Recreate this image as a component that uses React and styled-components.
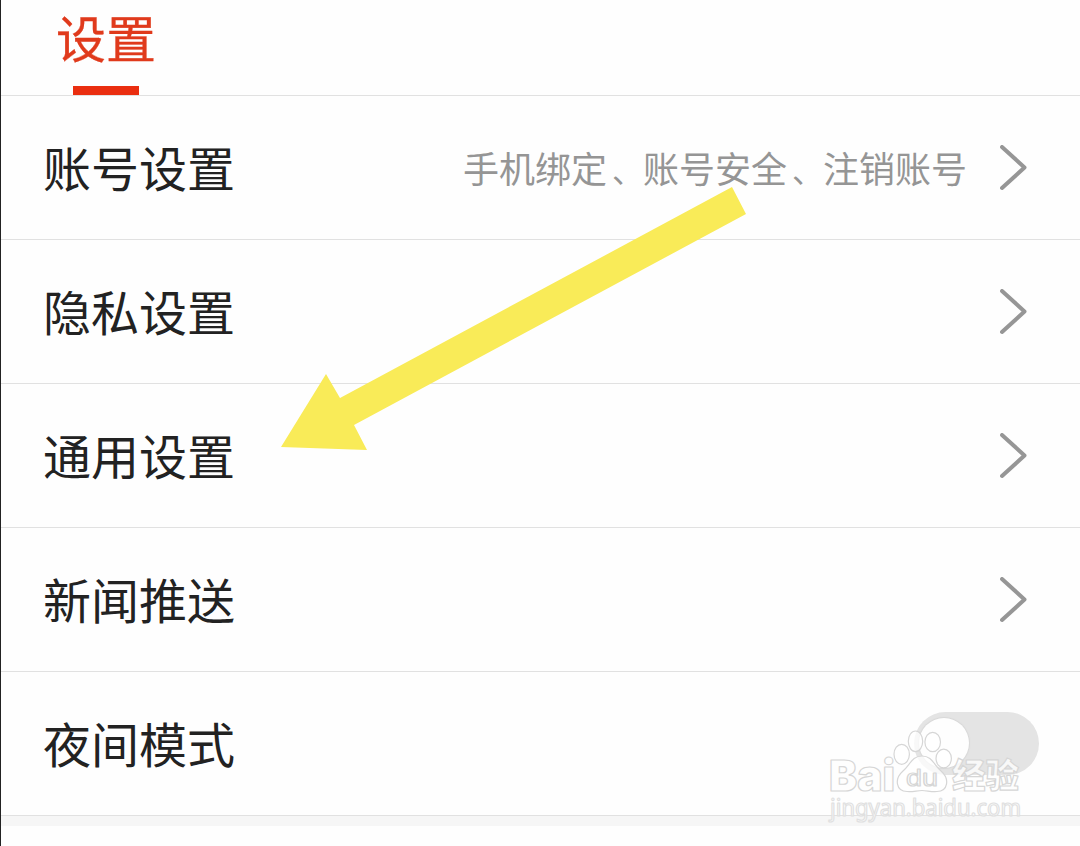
import React from "react";
import styled, { createGlobalStyle } from "styled-components";

const GlobalStyle = createGlobalStyle`
  * {
    box-sizing: border-box;
  }
  body {
    margin: 0;
    background: #fefefe;
    font-family: "Noto Sans CJK SC", sans-serif;
  }
`;

const Page = styled.div`
  position: relative;
  height: 846px;
  overflow: hidden;
  border-left: 1px solid #222;
  background: #fefefe;
`;
const Header = styled.header`
  display: flex;
  height: 96px;
  padding-left: 55px;
  border-bottom: 1px solid #e1e1e1;
`;
const Tab = styled.div`
  display: flex;
  flex-direction: column;
  justify-content: space-between;
  align-items: center;
  color: #e03a1c;
  font-size: 50px;
  line-height: 73px;
  -webkit-text-stroke: 0.3px #e03a1c;
`;
const TabLine = styled.span`
  width: 66px;
  height: 9px;
  background: #ea2e10;
`;
const Row = styled.div`
  display: flex;
  align-items: center;
  height: 144px;
  padding: 0 ${(props) => (props.$toggle ? 41 : 53)}px 0 42px;
  border-bottom: 1px solid #e1e1e1;
`;
const Label = styled.span`
  flex: 1;
  padding-bottom: 4px;
  color: #222;
  font-size: 48px;
  line-height: 72px;
`;
const Detail = styled.span`
  margin-right: 33px;
  padding-bottom: 2px;
  color: #959595;
  font-size: 36px;
  line-height: 54px;
`;
const Comma = styled.span`
  display: inline-block;
  width: 36px;
  padding-left: 5px;
  font-size: 31px;
  line-height: 1;
`;
const Chevron = styled.svg`
  width: 27px;
  height: 46px;
  fill: none;
  stroke: #969696;
  stroke-width: 4;
  stroke-linecap: round;
  stroke-linejoin: round;
`;
const Switch = styled.span`
  width: 125px;
  height: 63px;
  padding: 6px 5px;
  border-radius: 32px;
  background: #e4e4e4;
`;
const Knob = styled.span`
  display: block;
  width: 50px;
  height: 50px;
  border-radius: 50%;
  background: #fefefe;
  box-shadow: 0 0 1px 1px #d8d8d8;
`;
const Band = styled.div`
  height: 10px;
  background: #f6f6f6;
`;
const Arrow = styled.svg`
  position: absolute;
  left: 279px;
  top: 185px;
  width: 468px;
  height: 268px;
  fill: #f9eb58;
`;
const Watermark = styled.svg`
  position: absolute;
  left: 819px;
  top: 720px;
  width: 220px;
  height: 110px;
  fill: rgba(255, 255, 255, 0.75);
  stroke: #d6d6d6;
  stroke-width: 1.2;
  stroke-linejoin: round;
`;

const rows = [
  { label: "账号设置", detail: ["手机绑定", "账号安全", "注销账号"] },
  { label: "隐私设置" },
  { label: "通用设置" },
  { label: "新闻推送" },
  { label: "夜间模式", toggle: true },
];

function App() {
  return (
    <Page>
      <GlobalStyle />
      <Header>
        <Tab>
          设置
          <TabLine />
        </Tab>
      </Header>
      {rows.map((row) => (
        <Row key={row.label} $toggle={row.toggle}>
          <Label>{row.label}</Label>
          {row.detail && (
            <Detail>
              {row.detail.map((item, i) => (
                <React.Fragment key={item}>
                  {i > 0 && <Comma>、</Comma>}
                  {item}
                </React.Fragment>
              ))}
            </Detail>
          )}
          {row.toggle ? (
            <Switch>
              <Knob />
            </Switch>
          ) : (
            <Chevron viewBox="0 0 27 46">
              <path d="M2 2 L24.5 22.5 L2 43" />
            </Chevron>
          )}
        </Row>
      ))}
      <Band />
      <Arrow viewBox="280 185 468 268">
        <path d="M732 187 L746 214 L354 425 L367 450 L281 447 L326 374 L340 398 Z" />
      </Arrow>
      <Watermark viewBox="820 720 220 110">
        <text
          x="829"
          y="790.5"
          fontSize="43"
          fontWeight="900"
          fontFamily="Inter"
          textLength="66"
          lengthAdjust="spacingAndGlyphs"
        >
          Bai
        </text>
        <ellipse cx="915.5" cy="741.3" rx="7.2" ry="10.3" />
        <ellipse cx="932.7" cy="742" rx="7.8" ry="9.7" />
        <ellipse cx="901.7" cy="754.3" rx="7.7" ry="10" />
        <ellipse cx="943.7" cy="758.5" rx="7.7" ry="9.3" />
        <path d="M922 756 C932 756 934 765 941 771 C950 779 948 791 937 791.5 C931 792 927 790.5 922 790.5 C917 790.5 913 792 907 791.5 C896 791 894 779 903 771 C910 765 912 756 922 756 Z" />
        <text
          x="906"
          y="786"
          fontSize="24"
          fontFamily="Liberation Sans"
          textLength="32"
          lengthAdjust="spacingAndGlyphs"
        >
          du
        </text>
        <text
          x="952"
          y="788"
          fontSize="34"
          fontWeight="900"
          fontFamily="Noto Sans CJK SC"
          textLength="67"
          lengthAdjust="spacingAndGlyphs"
        >
          经验
        </text>
        <text
          x="830"
          y="816"
          fontSize="23"
          fontFamily="Noto Sans"
          textLength="191"
          lengthAdjust="spacingAndGlyphs"
          stroke="#e0e0e0"
        >
          jingyan.baidu.com
        </text>
      </Watermark>
    </Page>
  );
}

export default App;
